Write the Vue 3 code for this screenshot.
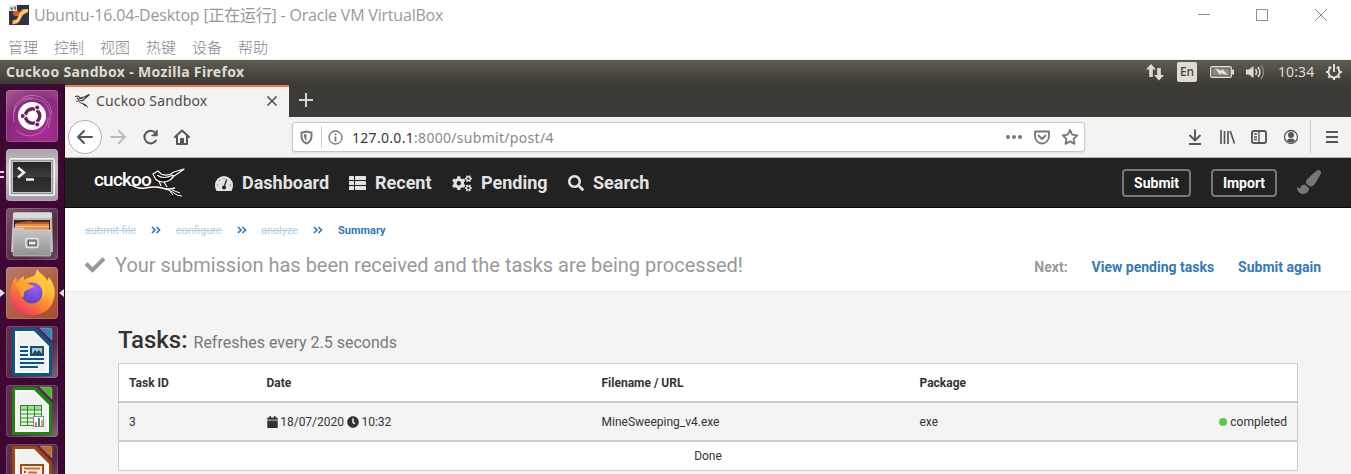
<script setup>
const menus = ['管理', '控制', '视图', '热键', '设备', '帮助']
const steps = [
  { label: 'submit file', cls: 's1' },
  { label: 'configure', cls: 's2' },
  { label: 'analyze', cls: 's3' },
]

// Closed outline of a cog with the given radii and number of teeth
function gear(cx, cy, outer, inner, teeth, offset = 0) {
  const pts = []
  const step = (Math.PI * 2) / teeth
  for (let i = 0; i < teeth; i++) {
    const a = i * step + offset
    for (const [f, r] of [[-0.3, inner], [-0.2, outer], [0.2, outer], [0.3, inner]]) {
      pts.push((cx + Math.cos(a + f * step) * r).toFixed(2) + ' ' + (cy + Math.sin(a + f * step) * r).toFixed(2))
    }
  }
  return 'M' + pts.join('L') + 'Z'
}
function hole(cx, cy, r) {
  return `M${cx - r} ${cy}a${r} ${r} 0 1 0 ${2 * r} 0a${r} ${r} 0 1 0 ${-2 * r} 0Z`
}
const cogs =
  gear(6.8, 8.2, 7, 5.3, 6, 0.52) + hole(6.8, 8.2, 2.2) +
  gear(16.4, 3.6, 3.6, 2.6, 6) + hole(16.4, 3.6, 1.2) +
  gear(16.4, 13, 3.6, 2.6, 6) + hole(16.4, 13, 1.2)
const docs = [
  { cls: 'writer', edge: '#0b5588', fold: '#2f86bd' },
  { cls: 'calc', edge: '#1c8410', fold: '#48b637' },
  { cls: 'impress', edge: '#a24712', fold: '#c0682a' },
]
</script>

<template>
  <div class="screen">
    <header class="host">
      <div class="title-row">
        <svg class="vb" width="20" height="20" viewBox="0 0 20 20">
          <rect width="20" height="20" fill="#2d3445" />
          <path d="M3 8Q7 12 10 8L14 4H19V7L14 10L10 17Q7 20 3 19L4 15Q9 15 9 11Q6 11 3 8Z" fill="#f5a63c" />
          <path d="M11 8L19 4.5V6L13 9L9 17L4 18Q10 15 11 8Z" fill="#ffd98a" />
          <circle cx="7" cy="8" r="3" fill="#e4571c" />
          <rect width="8" height="6" fill="#e6e6e8" />
          <path d="M2 2V4.5H3.5V3.2H2M5 1.5V3.2H6.5M6.5 1.5V5" stroke="#555" fill="none" stroke-width=".8" />
        </svg>
        <span class="host-title">Ubuntu-16.04-Desktop [正在运行] - Oracle VM VirtualBox</span>
        <svg class="win" width="130" height="14" viewBox="0 0 130 14" fill="none" stroke="#8c8c8c">
          <path d="M0 6.5H12M58.5 1.5H69.500V12.5H58.500ZM117 1L129 13M129 1L117 13" />
        </svg>
      </div>
      <nav class="menu"><span v-for="m in menus" :key="m">{{ m }}</span></nav>
    </header>

    <div class="panel">
      <b class="panel-title">Cuckoo Sandbox - Mozilla Firefox</b>
      <div class="tray">
        <svg width="190" height="24" viewBox="0 0 190 24" class="tray-icons">
          <path d="M10.500 4L5.500 9.500H8.700V17H12.300V9.500H15.500ZM18.500 20.500L13.500 15H16.700V8H20.300V15H23.500Z" transform="translate(-5.500)" fill="#dfdbd2" />
          <rect x="31" y="2" width="20" height="20" rx="2" fill="#dfdbd2" />
          <rect x="64.700" y="6.700" width="20.600" height="10.600" rx="1.500" fill="none" stroke="#dfdbd2" stroke-width="1.400" />
          <rect x="66.500" y="8.500" width="17" height="7" fill="#8d8b85" />
          <path d="M87 9.500V14.500" stroke="#dfdbd2" stroke-width="2" />
          <path d="M69 8L76 11V8.500L82 15.500L74.500 13V15.500Z" fill="#e8e4dc" />
          <path d="M100 9.500H103L107.500 6V18L103 14.500H100Z" fill="#dfdbd2" />
          <path d="M109.500 9Q111.700 12 109.500 15M112 7Q115.800 12 112 17" stroke="#dfdbd2" stroke-width="1.500" fill="none" />
          <path d="M115 5Q120 12 115 19" stroke="#85837d" stroke-width="1.500" fill="none" />
        </svg>
        <span class="lang">En</span>
        <span class="time">10:34</span>
        <svg class="power" width="18" height="18" viewBox="0 0 18 18">
          <path d="M6.300 4.200A5.500 5.500 0 1 0 11.700 4.200" stroke="#dfdbd2" stroke-width="2" fill="none" />
          <path d="M9 1V9" stroke="#dfdbd2" stroke-width="2" />
          <path d="M3.800 3.800L5 5M13 5L14.200 3.800M1 9H3.500M14.500 9H17M3.300 14.700L5 13M13 13L14.700 14.700M9 14.500V17" stroke="#dfdbd2" stroke-width="2.200" />
        </svg>
      </div>
    </div>

    <div class="desktop">
      <aside class="dock">
        <div class="tile dash">
          <svg width="52" height="52" viewBox="0 0 52 52">
            <g fill="none" stroke="#fff" stroke-opacity=".3">
              <path d="M8 32C5 18 15 7 30 9C43 11 47 25 42 38" /><path d="M16 8C30 1 45 9 46 25" /><path d="M10 40C22 52 43 44 42 27" /><path d="M8 22C8 12 16 7 27 8" />
            </g>
            <circle cx="26" cy="26" r="14" fill="#fff" />
            <circle cx="26.500" cy="26" r="7.200" fill="none" stroke="#6d2057" stroke-width="3.600" />
            <path d="M26.500 26L17 26M26.500 26L31.500 17M26.500 26L31.500 35" stroke="#fff" stroke-width="1.500" />
            <circle cx="26.500" cy="26" r="5.300" fill="#fff" />
            <g fill="#6d2057" stroke="#fff"><circle cx="16.700" cy="26" r="2.500" /><circle cx="31.200" cy="17.500" r="2.500" /><circle cx="31.200" cy="34.500" r="2.500" /></g>
          </svg>
        </div>
        <div class="tile term">
          <svg width="52" height="52" viewBox="0 0 52 52">
            <defs><linearGradient id="tg" x2="0" y2="1"><stop stop-color="#242424" /><stop offset=".5" stop-color="#3e3e3e" /><stop offset=".51" stop-color="#292929" /><stop offset="1" stop-color="#343434" /></linearGradient></defs>
            <rect x="3.500" y="9.500" width="45" height="37" rx="1.500" fill="#d9dada" stroke="#f5f5f5" />
            <rect x="5.500" y="11.500" width="41" height="33" fill="#c4c5c5" stroke="#999" />
            <rect x="7" y="13" width="38" height="30" fill="url(#tg)" />
            <path d="M12 18.500L18 23.500L12 28.500M20 30.500H28" fill="none" stroke="#eee" stroke-width="2.500" />
          </svg>
          <i class="pips"></i>
        </div>
        <div class="tile files">
          <svg width="52" height="52" viewBox="0 0 52 52">
            <defs><linearGradient id="fg" x2="0" y2="1"><stop stop-color="#c7c7c7" /><stop offset="1" stop-color="#929292" /></linearGradient></defs>
            <path d="M7 6Q7 4 9 4H44Q46 4 46 6L47 44H5Z" fill="#bcbcbc" /><path d="M7 5H46V10H7Z" fill="#dadada" />
            <rect x="8" y="12" width="36" height="13" fill="#3c2b24" />
            <path d="M10 15L24 13L27 14H43V24H10Z" fill="#b35b29" /><path d="M9 16H43V24H9Z" fill="#f08a42" /><path d="M9 18.500H43" stroke="#fbd2a5" />
            <path d="M7 20H17L19 22H45V46Q45 48 43 48H9Q7 48 7 46Z" fill="url(#fg)" stroke="#d4d4d4" stroke-width=".7" />
            <rect x="20" y="30.500" width="12" height="9" rx="1.500" fill="#999" stroke="#e5e5e5" stroke-width="1.500" /><rect x="22.500" y="33" width="7.500" height="4" fill="#eee" stroke="#555" />
          </svg>
        </div>
        <div class="tile fox">
          <svg width="52" height="52" viewBox="0 0 52 52">
            <defs>
              <linearGradient id="fx" x1=".9" y1="0" x2=".2" y2="1"><stop stop-color="#ffe14a" /><stop offset=".35" stop-color="#ffbd31" /><stop offset=".65" stop-color="#fb7b34" /><stop offset="1" stop-color="#ed2c68" /></linearGradient>
              <radialGradient id="fp" cx=".65" cy=".25" r=".9"><stop stop-color="#9b5cff" /><stop offset="1" stop-color="#5140b4" /></radialGradient>
            </defs>
            <path d="M31 2C34 7 39 8 41 14L43 10C48 17 50 24 48 31C46 42 37 48 26 48C13 48 4 39 4 27C4 20 7 14 10 10L11 15C13 12 16 10 18 9L18 13C22 10 27 10 29 8Z" fill="url(#fx)" />
            <circle cx="26" cy="26" r="10.500" fill="url(#fp)" />
            <path d="M10 17C14 13 20 14 22 17L28 18.500C28 21 24 21.500 21 23C18 24 17 27 18 30C16 30 14 27 14 24Z" fill="#ffa133" />
            <path d="M27 14C35 15 39 23 36 31C42 26 41 16 34 12Z" fill="#ffc33a" />
          </svg>
          <i class="left-arrow"></i><i class="right-arrow"></i>
        </div>
        <div v-for="d in docs" :key="d.cls" class="tile doc">
          <svg width="52" height="52" viewBox="0 0 52 52">
            <path d="M8 2H30L46 18V48Q46 50 44 50H8Q6 50 6 48V4Q6 2 8 2Z" :fill="d.edge" />
            <path d="M34 2H44Q46 2 46 4V14Z" :fill="d.fold" stroke="#fff" stroke-opacity=".25" />
            <path d="M9 5H28L43 20V47H9Z" fill="#fff" /><path d="M11 7H27L41 21V45H11Z" fill="#f0f1f1" />
            <g v-if="d.cls === 'writer'">
              <path d="M14 21H22M14 25H22M14 29H22M14 33H38M14 37H38M14 41H32" stroke="#0b5588" stroke-width="2" />
              <rect x="25" y="21" width="12" height="8" fill="#92d1ef" stroke="#184e73" stroke-width="2" /><path d="M26 28L29 24L31 26L33 24L36 28Z" fill="#37494d" /><circle cx="35" cy="23.500" r="1.200" fill="#f8bb45" />
            </g>
            <g v-else-if="d.cls === 'calc'">
              <rect x="14.500" y="20.500" width="21" height="20" fill="#e8f7e3" stroke="#2d8c20" /><path d="M15 21H35V25H15Z" fill="#a5db98" />
              <path d="M14 25H36M14 29H36M14 33H36M14 37H36M21.500 20V41M28.500 20V41" stroke="#2d8c20" />
              <rect x="27.500" y="31.500" width="10" height="10" fill="#fff" stroke="#888" /><path d="M30 41V37" stroke="#ef7932" stroke-width="2" /><path d="M33 41V33" stroke="#2786c5" stroke-width="2" /><path d="M36 41V35" stroke="#e7a82c" stroke-width="2" />
            </g>
            <g v-else><rect x="15" y="21" width="22" height="22" fill="#fff0e6" stroke="#a24712" stroke-width="2" /><path d="M18 24.500H34M22 28.500H31" stroke="#ca6c35" stroke-width="2" /><path d="M18 28H20" stroke="#a24712" stroke-width="2" /></g>
          </svg>
        </div>
      </aside>

      <main class="browser">
        <div class="tabs">
          <div class="tab">
            <svg class="bird-fav" width="17" height="17" viewBox="0 0 17 17" fill="none" stroke="#343434">
              <path d="M1 3.500L4 3L6 5L10 4L15.500 1.500L11 5.500L8.500 8L5 7L3 5" stroke-width="1.100" /><path d="M5 5L9 6M2 8Q5 8 7 10L10 11L14 14.500M10 11L13 13M8 10L11 13" stroke-width=".9" />
            </svg>
            <span>Cuckoo Sandbox</span>
            <svg class="close" width="12" height="12" viewBox="0 0 12 12"><path d="M1.500 1.500L10.500 10.500M10.500 1.500L1.500 10.500" stroke="#555" stroke-width="1.700" /></svg>
          </div>
          <svg class="plus" width="16" height="16" viewBox="0 0 16 16"><path d="M8 1V15M1 8H15" stroke="#d7d4cf" stroke-width="2" /></svg>
        </div>
        <div class="toolbar">
          <svg class="navs" width="140" height="40" viewBox="0 0 140 40" fill="none" stroke="#57565a" stroke-width="2" stroke-linecap="round" stroke-linejoin="round">
            <circle cx="20" cy="20" r="16.500" fill="#fff" stroke="#b1afad" stroke-width="1" />
            <path d="M27 20H13M19 14L13 20L19 26" /><path d="M46 20H60M54 14L60 20L54 26" stroke="#bbb" />
            <path d="M90.500 16A6.300 6.300 0 1 0 91 23.500" /><path d="M92 13.500V18.500H87" fill="#57565a" stroke-width="1.500" />
            <path d="M110 20L117 13.500L124 20M112 19V27H122V19M116 27V22H118V27" />
          </svg>
          <div class="address">
            <svg width="53" height="30" viewBox="1 0 53 30" fill="none" stroke="#77777a">
              <path d="M9.500 9.500Q12 9.500 14.500 8.500Q17 9.500 19.500 9.500V13Q19.500 18.500 14.500 20.500Q9.500 18.500 9.500 13Z" stroke-width="1.900" /><path d="M14.500 11V18Q12 16.500 12 13V11.300Z" fill="#77777a" stroke="none" />
              <path d="M29.500 3V25" stroke="#cfcdcc" /><circle cx="43.500" cy="14.500" r="6.500" stroke-width="1.300" /><path d="M43.500 13.500V18.500M43.500 10.500V12.200" stroke-width="1.700" />
            </svg>
            <span class="url"><em>127.0.0.1</em>:8000/submit/post/4</span>
            <svg class="addr-right" width="80" height="30" viewBox="0 0 80 30" fill="none" stroke="#77777a" stroke-width="1.800" stroke-linejoin="round">
              <g fill="#77777a" stroke="none"><circle cx="3" cy="14" r="2" /><circle cx="9" cy="14" r="2" /><circle cx="15" cy="14" r="2" /></g>
              <path d="M30 8.500H44V13C44 17 41 20.500 37 20.500S30 17 30 13Z" /><path d="M33.500 12.500L37 16L40.500 12.500" stroke-linecap="round" />
              <path d="M65 7L67.200 11.700L72.300 12.300L68.600 15.800L69.500 20.900L65 18.400L60.500 20.900L61.400 15.800L57.700 12.300L62.800 11.700Z" />
            </svg>
          </div>
          <svg class="tools" width="166" height="40" viewBox="0 0 166 40" fill="none" stroke="#57565a" stroke-width="1.900">
            <path d="M10 12.500V23M4.500 18L10 23.500L15.500 18M4 27H16" />
            <path d="M36 13V27M39.500 14V27M43 14V27M45.200 14L49.500 26.500" stroke-width="1.700" />
            <rect x="67" y="14" width="14" height="12" rx="2" /><path d="M74 14V26M69 17H72M69 20H72M69 22.500H72" stroke-width="1.400" />
            <circle cx="106" cy="20" r="6.500" stroke-width="1.300" /><circle cx="106" cy="18" r="3" fill="#57565a" stroke="none" /><path d="M101.500 23.500Q106 19.500 110.500 23.500Q106 28 101.500 23.500Z" fill="#57565a" stroke="none" />
            <path d="M125.500 3V37" stroke="#d0cece" stroke-width="1" /><path d="M141 15H153M141 20H153M141 25H153" stroke-width="2" />
          </svg>
        </div>

        <nav class="app-nav">
          <div class="logo">
            <span>cuckoo</span>
            <svg width="92" height="32" viewBox="0 0 92 32" fill="none" stroke="#fff" stroke-linejoin="round">
              <path d="M38 17Q43 21 51 20Q61 18 68 20Q74 22 81 20" stroke-width="1.600" />
              <path d="M71 21Q77 22 80 25T88 28M78 22L86 25M75 22L79 27" stroke-width="1" />
              <path d="M59 6L64 3L67 6Q74 9 80 4L90 1L86 4L80 8Q77 13 70 14Q63 14 61 10Z" fill="#111" stroke-width="1.200" />
              <path d="M63 7Q69 12 79 7M70 14L73 19M65 13L67 18M77 11L80 7" stroke-width="1.200" />
            </svg>
          </div>
          <a class="n1"><svg width="18" height="15" viewBox="0 0 18 15"><path d="M0 9A9 9 0 0 1 18 9Q18 12 16.700 14.500Q16.400 15 15.800 15H2.200Q1.600 15 1.300 14.500Q0 12 0 9Z" fill="#e3e3e3" /><path d="M11.700 3.500L9.400 10" stroke="#222" stroke-width="1.200" /><circle cx="9" cy="11.500" r="2" fill="#222" /><g fill="#222" fill-opacity=".5"><circle cx="9" cy="2.500" r=".8" /><circle cx="4.500" cy="4.500" r=".8" /><circle cx="2.600" cy="9" r=".8" /><circle cx="15.400" cy="9" r=".8" /></g></svg><span>Dashboard</span></a>
          <a class="n2"><svg width="17" height="14" viewBox="0 0 17 14" fill="#e3e3e3"><rect width="5" height="4" rx=".6" /><rect y="5" width="5" height="4" rx=".6" /><rect y="10" width="5" height="4" rx=".6" /><rect x="6" width="11" height="4" rx=".6" /><rect x="6" y="5" width="11" height="4" rx=".6" /><rect x="6" y="10" width="11" height="4" rx=".6" /></svg><span>Recent</span></a>
          <a class="n3"><svg width="20" height="17" viewBox="0 0 20 17"><path :d="cogs" fill="#e3e3e3" fill-rule="evenodd" /></svg><span>Pending</span></a>
          <a class="n4"><svg width="16" height="16" viewBox="0 0 512 512"><path d="M505 442.700L405.300 343c-4.500-4.500-10.600-7-17-7H372c27.600-35.300 44-79.700 44-128C416 93.100 322.900 0 208 0S0 93.100 0 208s93.100 208 208 208c48.300 0 92.700-16.400 128-44v16.300c0 6.400 2.500 12.500 7 17l99.700 99.700c9.400 9.400 24.600 9.400 33.900 0l28.300-28.300c9.400-9.400 9.400-24.600.1-34zM208 336c-70.700 0-128-57.200-128-128 0-70.700 57.200-128 128-128 70.700 0 128 57.200 128 128 0 70.700-57.200 128-128 128z" fill="#e3e3e3" /></svg><span>Search</span></a>
          <div class="actions">
            <button class="submit">Submit</button><button class="import">Import</button>
            <svg width="24" height="24" viewBox="0 0 512 512"><path fill="#777" d="M167.020 309.340c-40.120 2.580-76.530 17.860-97.190 72.300-2.350 6.210-8 9.980-14.590 9.980-11.110 0-45.460-27.670-55.250-34.350C0 439.620 37.930 512 128 512c75.860 0 128-43.770 128-120.190 0-3.110-.65-6.080-.97-9.130l-88.010-73.340zM457.890 0c-15.160 0-29.370 6.710-40.210 16.450C213.270 199.050 192 203.340 192 257.090c0 13.700 3.250 26.760 8.730 38.700l63.820 53.180c7.210 1.800 14.640 3.030 22.390 3.030 62.110 0 98.110-45.470 211.160-256.460 7.380-14.350 13.900-29.850 13.900-45.990C512 20.640 486 0 457.890 0z" /></svg>
          </div>
        </nav>

        <section class="notice">
          <div class="crumbs">
            <template v-for="s in steps" :key="s.label"><span :class="['done', s.cls]">{{ s.label }}</span><svg width="10" height="8" viewBox="0 0 10 8" :class="'a' + s.cls"><path d="M1 1L4 4L1 7M5.500 1L8.500 4L5.500 7" fill="none" stroke="#337ab7" stroke-width="1.700" /></svg></template>
            <b>Summary</b>
          </div>
          <div class="message">
            <svg width="20" height="20" viewBox="0 0 512 512"><path fill="#999" d="M173.898 439.404l-166.400-166.400c-9.997-9.997-9.997-26.206 0-36.204l36.203-36.204c9.997-9.998 26.207-9.998 36.204 0L192 312.690 432.095 72.596c9.997-9.997 26.207-9.997 36.204 0l36.203 36.204c9.997 9.997 9.997 26.206 0 36.204l-294.400 294.401c-9.998 9.997-26.207 9.997-36.204-.001z" /></svg>
            <span class="received">Your submission has been received and the tasks are being processed!</span>
            <div class="next"><span>Next:</span><a>View pending tasks</a><a>Submit again</a></div>
          </div>
        </section>

        <section class="content">
          <h1>Tasks: <small>Refreshes every 2.5 seconds</small></h1>
          <div class="table">
            <div class="row head"><span>Task ID</span><span>Date</span><span>Filename / URL</span><span>Package</span><span></span></div>
            <div class="row"><span>3</span>
              <span class="date"><svg width="11" height="12" viewBox="0 0 448 512"><path fill="#333" d="M12 192h424c6.600 0 12 5.400 12 12v260c0 26.500-21.500 48-48 48H48c-26.500 0-48-21.500-48-48V204c0-6.600 5.400-12 12-12zm436-44v-36c0-26.500-21.500-48-48-48h-48V12c0-6.600-5.400-12-12-12h-40c-6.600 0-12 5.400-12 12v52H160V12c0-6.600-5.400-12-12-12h-40c-6.600 0-12 5.400-12 12v52H48C21.500 64 0 85.500 0 112v36c0 6.600 5.400 12 12 12h424c6.600 0 12-5.400 12-12z" /></svg>18/07/2020<svg width="12" height="12" viewBox="0 0 512 512"><path fill="#333" d="M256 8C119 8 8 119 8 256S119 504 256 504 504 393 504 256 393 8 256 8Zm92.490 313l-20 25a16 16 0 0 1-22.490 2.500l-67-49.720a40 40 0 0 1-15-31.230V112a16 16 0 0 1 16-16h32a16 16 0 0 1 16 16V256l58 42.500A16 16 0 0 1 348.490 321Z" /></svg>10:32</span>
              <span>MineSweeping_v4.exe</span><span>exe</span><span class="status"><i></i>completed</span>
            </div>
            <div class="finish">Done</div>
          </div>
        </section>
      </main>
    </div>
  </div>
</template>

<style>
html, body { margin: 0; overflow: hidden; }
</style>

<style scoped>
* { box-sizing: border-box; }
svg { display: block; flex: none; }
span, b, a { white-space: nowrap; }
.screen { width: 1351px; height: 474px; overflow: hidden; background: #fff; font-family: Roboto, "Liberation Sans", sans-serif; }
.host { height: 60px; border-bottom: 1px solid #f0f0f0; color: #999; font-family: "Open Sans", "Noto Sans CJK SC", sans-serif; }
.title-row { display: flex; height: 31px; align-items: center; padding: 0 23px 0 9px; }
.vb { margin-top: -1px; }
.host-title { margin-left: 5px; font-size: 16px; line-height: 31px; letter-spacing: -.2px; }
.win { margin-left: auto; margin-top: -1px; }
.menu { display: flex; gap: 16px; padding-left: 8px; font: 15px/31px "Noto Sans CJK SC", sans-serif; font-weight: 300; color: #858585; }
.menu span { width: 30px; }
.panel { height: 24px; background: linear-gradient(#5d5a51, #3d3b37); display: flex; color: #dfdbd2; font-family: "Noto Sans", sans-serif; border-top: 1px solid #5c5d4c; }
.panel-title { margin-left: 6px; font-size: 14px; line-height: 22px; letter-spacing: .33px; }
.tray { position: relative; margin-left: auto; width: 205px; display: flex; }
.tray-icons { position: absolute; left: 0; top: -1px; }
.lang { position: absolute; left: 31px; width: 20px; text-align: center; color: #45433e; font-size: 12px; font-weight: 500; line-height: 22px; }
.time { margin-left: 132px; font-size: 14px; line-height: 22px; letter-spacing: .1px; }
.power { margin: 2px 0 0 11px; }
.desktop { display: flex; height: 390px; }
.dock { width: 65px; flex: none; background: #3f0733; border-right: 1px solid #24031e; padding: 6px 0 0 6px; display: flex; flex-direction: column; gap: 7px; overflow: hidden; }
.tile { position: relative; width: 52px; height: 52px; flex: none; border-radius: 4px; background: linear-gradient(135deg, #7e5370, #512842 65%, #6e4761); box-shadow: inset 0 0 0 1px rgba(255, 255, 255, .15); }
.dash { background: radial-gradient(circle at 65% 80%, #a82d92, #8c2a7f 60%, #a46091); }
.term { background: linear-gradient(#aaa3a7, #c8c6c7 40%, #a29ca0); }
.fox { background: linear-gradient(145deg, #b67b68, #a94a2c); }
.doc { background: linear-gradient(135deg, #62314f, #552748 60%, #856278); }
.pips { position: absolute; left: -6px; top: 22px; width: 4px; height: 7px; border-top: 2px solid #ddd; border-bottom: 2px solid #ddd; }
.left-arrow, .right-arrow { position: absolute; top: 22px; border: 4px solid transparent; }
.left-arrow { left: -6px; border-left: 5px solid #ddd; border-right: 0; }
.right-arrow { left: 53px; border-right: 5px solid #ddd; border-left: 0; }
.browser { width: 1286px; flex: none; background: #f4f4f4; }
.tabs { display: flex; height: 33px; background: #3c3b37; padding-top: 1px; }
.tab { width: 224px; height: 32px; border-top: 2px solid #f1794b; background: #f4f3f2; color: #4c4c4c; display: flex; align-items: center; padding-left: 9px; font: 14px/30px "Noto Sans", sans-serif; }
.tab svg { position: relative; top: -1px; }
.tab span { margin: -2px 0 0 5px; width: 125px; letter-spacing: .15px; }
.close { margin-left: 45px; margin-right: 8px; width: 12px; }
.bird-fav { width: 17px; }
.plus { margin: 7px 0 0 9px; }
.toolbar { display: flex; height: 41px; background: #f4f3f2; border-bottom: 1px solid #b5b3b1; }
.navs { width: 140px; }
.address { margin: 5px 0 0 87px; width: 793px; height: 30px; border: 1px solid #c8c7c5; border-radius: 3px; background: #fff; display: flex; box-shadow: 0 1px 2px #ddd; }
.url { margin-left: 6px; color: #888; font: 14px/29px "Noto Sans", sans-serif; letter-spacing: .3px; }
.url em { font-style: normal; color: #38383d; }
.addr-right { margin-left: auto; margin-right: -1px; }
.tools { margin-left: 100px; }
.app-nav { height: 50px; background: #222; border-bottom: 1px solid #080808; display: flex; color: #e3e3e3; font-size: 18px; font-weight: 700; }
.logo { position: relative; width: 92px; height: 32px; margin: 10px 0 0 29px; }
.logo span { display: block; font-family: Roboto, sans-serif; font-weight: 500; font-size: 19px; line-height: 23px; letter-spacing: -.8px; color: #fff; }
.logo svg { position: absolute; left: 0; top: 0; }
.app-nav a { display: flex; align-items: center; height: 48px; }
.app-nav a svg { margin-top: 2px; }
.n1 { margin-left: 29px; width: 134px; }
.n2 { width: 103px; }
.n3 { width: 116px; }
.n1 span, .n2 span, .n3 span, .n4 span { margin-left: 9px; }
.actions { margin-left: auto; display: flex; align-items: flex-start; padding: 11px 30px 0 0; }
button { height: 28px; border: 2px solid #777; border-radius: 4px; background: #222; color: #fff; font: 700 14px/22px Roboto, sans-serif; padding: 0; }
.submit { width: 69px; margin-right: 20px; }
.import { width: 66px; margin-right: 20px; }
.actions svg { margin-top: 1px; }
.notice { height: 84px; background: #fff; border-bottom: 1px solid #e7e7e7; padding: 14px 30px 0 20px; }
.crumbs { display: flex; align-items: center; height: 16px; font-size: 11px; color: #337ab7; }
.crumbs b { font-weight: 700; }
.done { color: #b4cee4; text-decoration: line-through; }
.s1 { width: 66px; } .s2 { width: 61px; } .s3 { width: 52px; }
.as1 { margin-right: 15px; } .as2 { margin-right: 14px; } .as3 { margin-right: 15px; }
.message { height: 50px; margin-top: 2px; display: flex; align-items: center; }
.received { margin-left: 10px; font-size: 20px; color: #999; line-height: 24px; }
.next { margin-left: auto; display: flex; align-items: center; font-weight: 700; font-size: 14px; color: #999; padding-top: 4px; }
.next a { color: #337ab7; margin-left: 24px; }
.content { padding: 34px 53px 0; color: #333; }
h1 { height: 37px; margin: 0; font-size: 24px; line-height: 28px; font-weight: 500; }
small { font-size: 16px; font-weight: 400; color: #777; }
.table { width: 1180px; border: 1px solid #ccc; font-size: 12px; background: #fff; }
.row { display: grid; grid-template-columns: 137.500px 335px 318px 200px 1fr; height: 39px; align-items: center; border-bottom: 2px solid #ccc; padding: 0 10px; background: #f4f4f4; }
.head { background: #fff; font-weight: 700; }
.date { display: flex; align-items: center; gap: 2.700px; }
.status { display: flex; justify-content: flex-end; align-items: center; gap: 3px; }
.status i { width: 8px; height: 8px; border-radius: 50%; background: #5cc84b; }
.finish { height: 28px; line-height: 28px; text-align: center; }
</style>
